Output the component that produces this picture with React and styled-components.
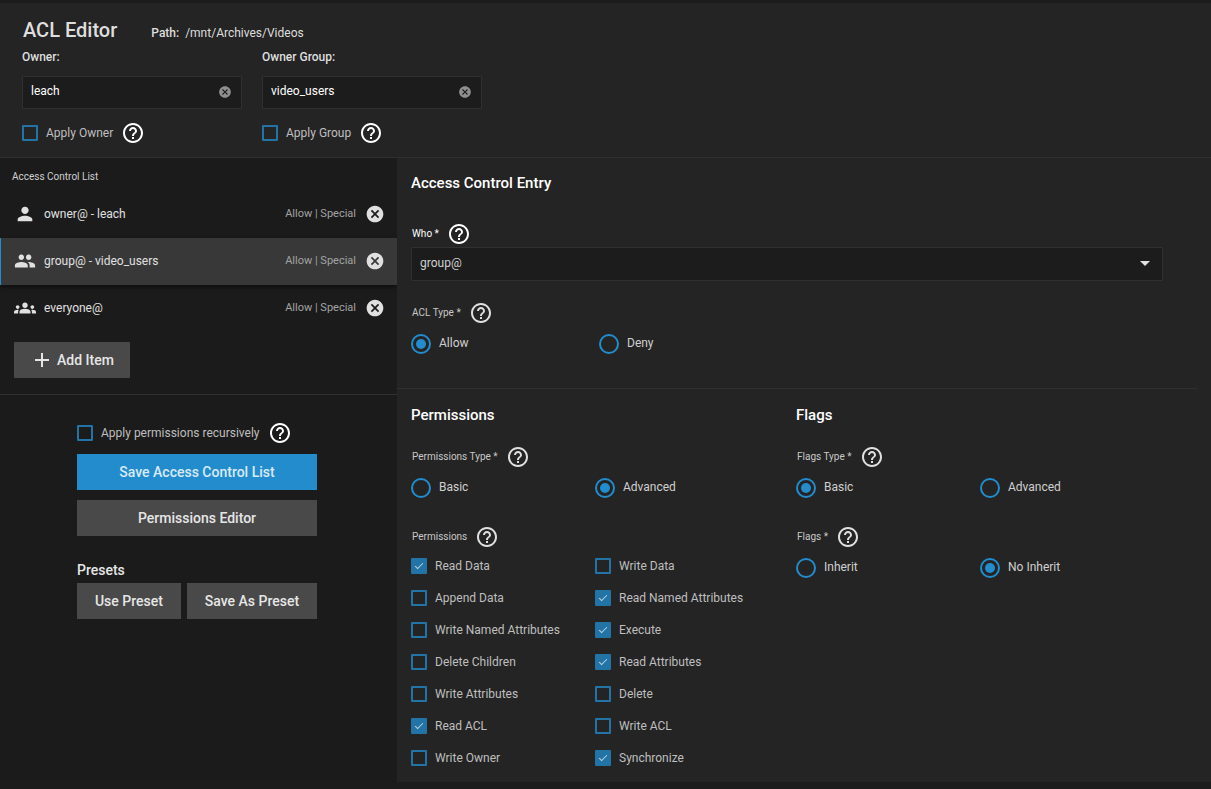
import React from "react";
import styled, { createGlobalStyle } from "styled-components";
import {
  MdAdd,
  MdArrowDropDown,
  MdCancel,
  MdGroups,
  MdHelpOutline,
  MdPeople,
  MdPerson,
} from "react-icons/md";

const entries = [
  { name: "owner@ - leach", icon: MdPerson },
  { name: "group@ - video_users", icon: MdPeople, selected: true },
  { name: "everyone@", icon: MdGroups },
];

const permissions = [
  { name: "Read Data", checked: true },
  { name: "Write Data" },
  { name: "Append Data" },
  { name: "Read Named Attributes", checked: true },
  { name: "Write Named Attributes" },
  { name: "Execute", checked: true },
  { name: "Delete Children" },
  { name: "Read Attributes", checked: true },
  { name: "Write Attributes" },
  { name: "Delete" },
  { name: "Read ACL", checked: true },
  { name: "Write ACL" },
  { name: "Write Owner" },
  { name: "Synchronize", checked: true },
];

const HelpButton = ({ topic, bright }) => (
  <IconButton type="button" aria-label={`Help: ${topic}`} $bright={bright}>
    <MdHelpOutline size={24} />
  </IconButton>
);

const Check = ({ label, checked }) => (
  <CheckLabel>
    <Checkbox defaultChecked={checked} />
    {label}
  </CheckLabel>
);

const OwnerField = ({ id, label, value, apply }) => (
  <Owner>
    <OwnerLabel htmlFor={id}>{label}</OwnerLabel>
    <InputBox>
      <TextInput id={id} defaultValue={value} />
      <ClearButton type="button" aria-label={`Clear ${label}`}>
        <MdCancel size={14} />
      </ClearButton>
    </InputBox>
    <ApplyRow>
      <Check label={apply} />
      <HelpButton topic={apply} bright />
    </ApplyRow>
  </Owner>
);

const RadioField = ({ name, label, options, value, columns }) => (
  <Field role="radiogroup" aria-label={label}>
    <FieldHead>
      <span>{label} *</span>
      <HelpButton topic={label} />
    </FieldHead>
    <Options $columns={columns}>
      {options.map((option) => (
        <RadioLabel key={option}>
          <Radio name={name} defaultChecked={option === value} />
          <span>{option}</span>
        </RadioLabel>
      ))}
    </Options>
  </Field>
);

export default () => {
  return (
    <Page>
      <GlobalStyle />
      <Header>
        <TitleRow>
          <Title>ACL Editor</Title>
          <Path>
            <b>Path:</b> /mnt/Archives/Videos
          </Path>
        </TitleRow>
        <Owners>
          <OwnerField
            id="owner"
            label="Owner:"
            value="leach"
            apply="Apply Owner"
          />
          <OwnerField
            id="group"
            label="Owner Group:"
            value="video_users"
            apply="Apply Group"
          />
        </Owners>
      </Header>

      <Body>
        <Sidebar>
          <ListTitle>Access Control List</ListTitle>
          <List>
            {entries.map(({ name, icon: Icon, selected }) => (
              <Entry key={name} $selected={selected}>
                <Icon size={22} />
                <EntryName>{name}</EntryName>
                <EntryType>Allow | Special</EntryType>
                <IconButton type="button" aria-label={`Remove ${name}`}>
                  <MdCancel size={20} />
                </IconButton>
              </Entry>
            ))}
          </List>
          <AddArea>
            <Button type="button">
              <MdAdd size={24} />
              Add Item
            </Button>
          </AddArea>
          <Actions>
            <RecursiveRow>
              <Check label="Apply permissions recursively" />
              <HelpButton topic="Apply permissions recursively" bright />
            </RecursiveRow>
            <Button type="button" $primary>
              Save Access Control List
            </Button>
            <Button type="button">Permissions Editor</Button>
            <PresetTitle>Presets</PresetTitle>
            <PresetButtons>
              <Button type="button">Use Preset</Button>
              <Button type="button">Save As Preset</Button>
            </PresetButtons>
          </Actions>
        </Sidebar>

        <Main>
          <Section>
            <SectionTitle>Access Control Entry</SectionTitle>
            <EntryFields>
              <Field>
                <FieldHead $bright>
                  <label htmlFor="who">Who *</label>
                  <HelpButton topic="Who" bright />
                </FieldHead>
                <SelectBox>
                  <Select id="who" defaultValue="group@">
                    <option>owner@</option>
                    <option>group@</option>
                    <option>everyone@</option>
                  </Select>
                  <MdArrowDropDown size={24} />
                </SelectBox>
              </Field>
              <RadioField
                name="aclType"
                label="ACL Type"
                options={["Allow", "Deny"]}
                value="Allow"
                columns={4}
              />
            </EntryFields>
          </Section>

          <Columns>
            <Column>
              <SectionTitle>Permissions</SectionTitle>
              <ColumnFields>
                <RadioField
                  name="permissionsType"
                  label="Permissions Type"
                  options={["Basic", "Advanced"]}
                  value="Advanced"
                />
                <Field role="group" aria-label="Permissions">
                  <FieldHead>
                    <span>Permissions</span>
                    <HelpButton topic="Permissions" />
                  </FieldHead>
                  <Options>
                    {permissions.map(({ name, checked }) => (
                      <Check key={name} label={name} checked={checked} />
                    ))}
                  </Options>
                </Field>
              </ColumnFields>
            </Column>
            <Column>
              <SectionTitle>Flags</SectionTitle>
              <ColumnFields>
                <RadioField
                  name="flagsType"
                  label="Flags Type"
                  options={["Basic", "Advanced"]}
                  value="Basic"
                />
                <RadioField
                  name="flags"
                  label="Flags"
                  options={["Inherit", "No Inherit"]}
                  value="No Inherit"
                />
              </ColumnFields>
            </Column>
          </Columns>
        </Main>
      </Body>
    </Page>
  );
};

const GlobalStyle = createGlobalStyle`
  * {
    box-sizing: border-box;
  }

  body {
    margin: 0;
    background: #1c1c1c;
    color: #d0d0d0;
    font-family: Roboto, "Liberation Sans", sans-serif;
    font-size: 12px;
    line-height: 16px;
  }

  button, input, select {
    font: inherit;
    color: inherit;
  }
`;

const Page = styled.div`
  border-top: 3px solid #1c1c1c;
  border-bottom: 6px solid #1c1c1c;
`;

const Header = styled.header`
  padding: 15px 22px 12px;
  background: #242424;
  border-bottom: 1px solid #303030;
`;

const TitleRow = styled.div`
  display: flex;
  align-items: center;
  gap: 34px;
  padding-left: 1px;
`;

const Title = styled.h1`
  margin: 0;
  font-size: 20px;
  font-weight: 500;
  line-height: 24px;
  color: #dedede;
`;

const Path = styled.div`
  padding-top: 5px;
  color: #dedede;

  b {
    margin-right: 3px;
    font-weight: 500;
  }
`;

const Owners = styled.div`
  display: flex;
  gap: 20px;
  padding-top: 7px;
`;

const Owner = styled.div`
  width: 220px;
`;

const OwnerLabel = styled.label`
  display: block;
  font-weight: 500;
  color: #dedede;
`;

const InputBox = styled.div`
  display: flex;
  align-items: center;
  height: 33px;
  margin-top: 11px;
  padding: 0 9px 2px 8px;
  background: #1c1c1c;
  border: 1px solid #303030;
  border-radius: 1px;
`;

const TextInput = styled.input`
  flex: 1;
  min-width: 0;
  height: 28px;
  padding: 0 0 1px;
  border: 0;
  outline: 0;
  background: transparent;
  color: #fff;
`;

const IconButton = styled.button`
  display: flex;
  padding: 0;
  border: 0;
  background: none;
  color: ${(props) => (props.$bright ? "#fff" : "#e0e0e0")};
  cursor: pointer;
`;

const ClearButton = styled(IconButton)`
  color: #8f8f8f;
`;

const ApplyRow = styled.div`
  display: flex;
  align-items: center;
  gap: 8px;
  margin-top: 12px;
`;

const CheckLabel = styled.label`
  display: flex;
  align-items: center;
  gap: 8px;
  color: #bfbfbf;
`;

const Checkbox = styled.input.attrs({ type: "checkbox" })`
  appearance: none;
  display: grid;
  flex: none;
  width: 16px;
  height: 16px;
  margin: 0;
  border: 2px solid #2274a7;
  border-radius: 1px;

  &:checked {
    background: #2274a7;
  }

  &:checked::after {
    content: "";
    width: 7px;
    height: 3px;
    margin: 3px 0 0 2px;
    border: solid #bcd0dd;
    border-width: 0 0 1px 1px;
    transform: rotate(-45deg);
  }
`;

const Body = styled.div`
  display: flex;
`;

const Sidebar = styled.aside`
  flex: none;
  width: calc((100% - 20px) / 3);
  background: #1b1b1b;
`;

const ListTitle = styled.h2`
  margin: 0;
  padding: 11px 12px 6px;
  font-size: 10px;
  font-weight: 400;
  color: #d0d0d0;
`;

const List = styled.ul`
  margin: 0;
  padding: 0;
  list-style: none;
`;

const Entry = styled.li`
  display: flex;
  align-items: center;
  height: 47px;
  padding: 0 12px 1px 14px;
  color: #e0e0e0;
  ${(props) =>
    props.$selected &&
    `
    background: #383838;
    box-shadow: inset 1px 0 #228ccd, 0 2px 4px rgba(0, 0, 0, 0.5);
  `}
`;

const EntryName = styled.span`
  flex: 1;
  padding-left: 8px;
`;

const EntryType = styled.span`
  padding-right: 9px;
  font-size: 11px;
  color: #a3a3a3;
`;

const AddArea = styled.div`
  padding: 10px 14px 16px;
  border-bottom: 1px solid #303030;
`;

const Button = styled.button`
  display: flex;
  align-items: center;
  justify-content: center;
  gap: 3px;
  height: 36px;
  padding: 0 16px;
  border: 0;
  background: ${(props) => (props.$primary ? "#228ccd" : "#494949")};
  color: ${(props) => (props.$primary ? "#d9eaf5" : "#e6e6e6")};
  font-size: 14px;
  font-weight: 500;
  cursor: pointer;
`;

const Actions = styled.div`
  display: flex;
  flex-direction: column;
  gap: 10px;
  width: 240px;
  margin: 26px auto 0 77px;
`;

const RecursiveRow = styled.div`
  display: flex;
  align-items: center;
  gap: 8px;
  margin-bottom: -1px;
`;

const PresetTitle = styled.h3`
  margin: 15px 0 -7px;
  font-size: 14px;
  font-weight: 500;
  line-height: 19px;
  color: #e6e6e6;
`;

const PresetButtons = styled.div`
  display: flex;
  gap: 6px;

  button {
    flex: 1 1 auto;
  }
`;

const Main = styled.main`
  flex: 1;
  min-width: 0;
  background: #242424;
`;

const Section = styled.section`
  margin-right: 14px;
  padding: 13px 34px 34px 14px;
  border-bottom: 1px solid #303030;
`;

const SectionTitle = styled.h2`
  margin: 0;
  font-size: 15px;
  font-weight: 500;
  line-height: 24px;
  color: #fff;
`;

const EntryFields = styled.div`
  display: grid;
  gap: 20px;
  padding-top: 27px;
`;

const Field = styled.div`
  color: #d0d0d0;
`;

const FieldHead = styled.div`
  display: flex;
  align-items: center;
  gap: 8px;
  height: 24px;
  padding-left: 1px;
  font-size: 10px;
  color: ${(props) => (props.$bright ? "#fff" : "#c8c8c8")};
`;

const SelectBox = styled.div`
  display: flex;
  position: relative;
  margin-top: 1px;

  svg {
    position: absolute;
    top: 4px;
    right: 6px;
    color: #e0e0e0;
    pointer-events: none;
  }
`;

const Select = styled.select`
  appearance: none;
  flex: 1;
  height: 34px;
  padding: 0 32px 2px 8px;
  border: 1px solid #303030;
  border-radius: 1px;
  background: #1c1c1c;
`;

const Options = styled.div`
  display: grid;
  grid-template-columns: repeat(${(props) => props.$columns || 2}, 1fr);
  row-gap: 16px;
  padding-top: 9px;
`;

const RadioLabel = styled.label`
  display: flex;
  gap: 8px;
  line-height: 18px;
`;

const Radio = styled.input.attrs({ type: "radio" })`
  appearance: none;
  display: grid;
  place-content: center;
  flex: none;
  width: 20px;
  height: 20px;
  margin: 0;
  border: 2px solid #228ccd;
  border-radius: 50%;

  &:checked::after {
    content: "";
    width: 10px;
    height: 10px;
    border-radius: 50%;
    background: #228ccd;
  }
`;

const Columns = styled.div`
  display: grid;
  grid-template-columns: 1fr 1fr;
  padding: 14px 30px 16px 14px;
`;

const Column = styled.section`
  padding-right: 17px;
`;

const ColumnFields = styled.div`
  display: grid;
  gap: 27px;
  padding-top: 18px;
`;
